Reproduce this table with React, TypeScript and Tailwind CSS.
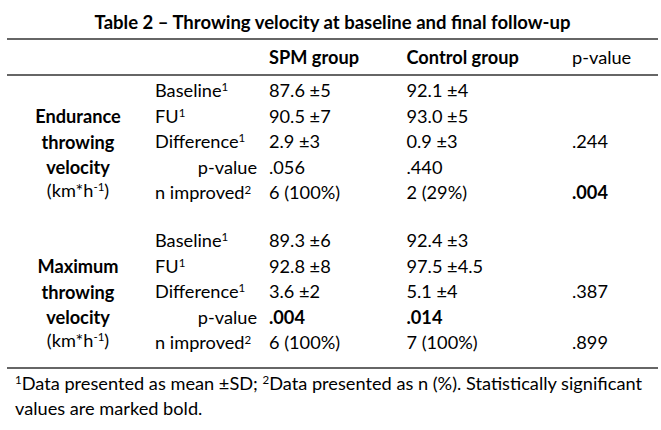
import React from "react";

type Row = {
  label: string;
  sup?: string;
  right?: boolean;
  spm: string;
  spmBold?: boolean;
  ctrl: string;
  ctrlBold?: boolean;
  p?: string;
  pBold?: boolean;
};

type Block = {
  title: string[];
  rows: Row[];
  gap: string;
};

const blocks: Block[] = [
  {
    title: ["Endurance", "throwing", "velocity"],
    gap: "pt-[2px]",
    rows: [
      { label: "Baseline", sup: "1", spm: "87.6 ±5", ctrl: "92.1 ±4" },
      { label: "FU", sup: "1", spm: "90.5 ±7", ctrl: "93.0 ±5" },
      { label: "Difference", sup: "1", spm: "2.9 ±3", ctrl: "0.9 ±3", p: ".244" },
      { label: "p-value", right: true, spm: ".056", ctrl: ".440" },
      { label: "n improved", sup: "2", spm: "6 (100%)", ctrl: "2 (29%)", p: ".004", pBold: true },
    ],
  },
  {
    title: ["Maximum", "throwing", "velocity"],
    gap: "pt-[22px]",
    rows: [
      { label: "Baseline", sup: "1", spm: "89.3 ±6", ctrl: "92.4 ±3" },
      { label: "FU", sup: "1", spm: "92.8 ±8", ctrl: "97.5 ±4.5" },
      { label: "Difference", sup: "1", spm: "3.6 ±2", ctrl: "5.1 ±4", p: ".387" },
      { label: "p-value", right: true, spm: ".004", spmBold: true, ctrl: ".014", ctrlBold: true },
      { label: "n improved", sup: "2", spm: "6 (100%)", ctrl: "7 (100%)", p: ".899" },
    ],
  },
];

const cols = "grid grid-cols-[120px_137.5px_165.5px_1fr]";

const BlockRows = ({ block }: { block: Block }) => (
  <div className={`flex ${block.gap}`}>
    <div className="w-[142px] pt-[26px] text-center">
      {block.title.map((t) => (
        <div key={t} className="font-bold leading-[25.6px]">
          {t}
        </div>
      ))}
      <div className="leading-[18.4px]">
        (km*h<sup className="text-[11.5px]">-1</sup>)
      </div>
    </div>
    <div className="flex-1">
      {block.rows.map((r) => (
        <div key={r.label} className={`${cols} h-[25.6px] leading-[25.6px]`}>
          <div className={r.right ? "pr-[12px] text-right" : "pl-[6px]"}>
            {r.label}
            {r.sup && <sup className="text-[11.5px]">{r.sup}</sup>}
          </div>
          <div className={r.spmBold ? "font-bold" : ""}>{r.spm}</div>
          <div className={r.ctrlBold ? "font-bold" : ""}>{r.ctrl}</div>
          <div className={r.pBold ? "font-bold" : ""}>{r.p}</div>
        </div>
      ))}
    </div>
  </div>
);

const App = () => {
  return (
    <div className="w-[661px] h-[430px] bg-white text-black text-[18.2px] font-['Lato',sans-serif] overflow-hidden">
      <div className="ml-[7px] w-[651px] pt-[9px] text-center text-[18.5px] font-bold leading-[26px]">
        Table 2 – Throwing velocity at baseline and final follow-up
      </div>

      <div className="ml-[7px] mt-[3px] w-[651px] border-t-2 border-b-2 border-[#666] pb-[11px]">
        <div className="flex h-[30px] pt-[4px] leading-[26px] border-b-2 border-[#666] box-content">
          <div className="w-[142px]" />
          <div className={`${cols} flex-1`}>
            <div />
            <div className="font-bold">SPM group</div>
            <div className="font-bold">Control group</div>
            <div>p-value</div>
          </div>
        </div>
        {blocks.map((b) => (
          <BlockRows key={b.title[0]} block={b} />
        ))}
      </div>

      <div className="pl-[15px] pt-[2px] leading-[25px]">
        <sup className="text-[11.5px]">1</sup>Data presented as mean ±SD; <sup className="text-[11.5px]">2</sup>Data
        presented as n (%). Statistically significant
        <br />
        values are marked bold.
      </div>
    </div>
  );
};

export default App;
